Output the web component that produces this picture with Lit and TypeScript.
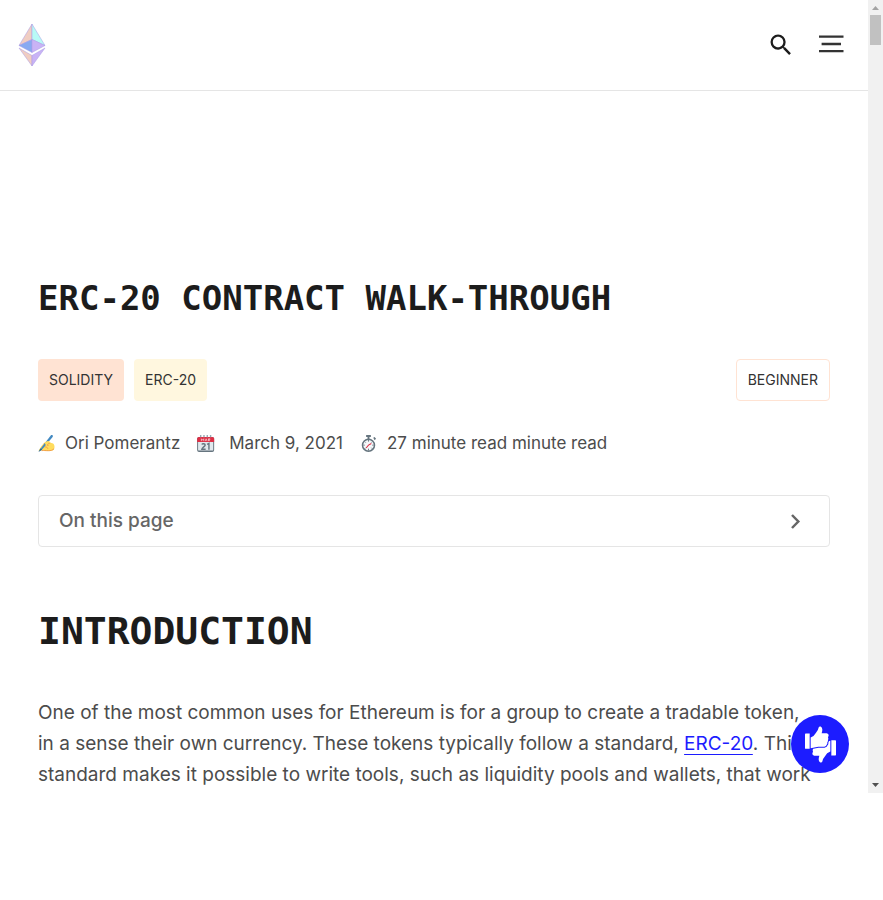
import { LitElement, html, css, svg } from "lit";
import { customElement } from "lit/decorators.js";

const logo = svg`
  <svg viewBox="0 0 28 42" width="28" height="42" aria-hidden="true">
    <g stroke="#a99be6" stroke-width="0.5" stroke-linejoin="round">
      <path d="M14 0 1 21.500l13-6z" fill="#f0cdc2"/>
      <path d="M14 0 27 21.500l-13-6z" fill="#b8faf6"/>
      <path d="M14 15.500 1 21.500l13 7z" fill="#88aaf1"/>
      <path d="M14 15.500 27 21.500l-13 7z" fill="#c9b3f5"/>
      <path d="M1 24l13 7.500v10.500z" fill="#f0cdc2"/>
      <path d="M27 24l-13 7.500v10.500z" fill="#c9b3f5"/>
    </g>
  </svg>`;

const searchIcon = svg`
  <svg viewBox="0 0 24 24" width="28" height="28" fill="#1c1c1c" aria-hidden="true">
    <path d="M15.5 14h-.79l-.28-.27A6.471 6.471 0 0 0 16 9.5 6.5 6.5 0 1 0 9.5 16c1.61 0 3.09-.59 4.23-1.57l.27.28v.79l5 4.99L20.49 19l-4.99-5zm-6 0C7.01 14 5 11.99 5 9.5S7.01 5 9.5 5 14 7.01 14 9.5 11.99 14 9.5 14z"/>
  </svg>`;

const menuIcon = svg`
  <svg viewBox="0 0 26 20" width="26" height="20" stroke="#333" stroke-width="2.3" aria-hidden="true">
    <path d="M1 1.700h24.500M3.600 9h19.400M1 16.200h24.500"/>
  </svg>`;

const chevron = svg`
  <svg viewBox="0 0 24 24" width="24" height="24" fill="none" stroke="#666" stroke-width="2.500" aria-hidden="true">
    <path d="M9 6 15.300 12.500 9 19"/>
  </svg>`;

const writing = svg`
  <svg viewBox="0 0 36 36" width="17" height="17" aria-hidden="true">
    <path d="M1 34c2-3 4-9 9-14 4-4 8-7 12-6l3 2 7 2c3 2 4 8 2 12-2 3-8 4-14 4-7 0-8-2-12-1-2 0-4 1-5 1z" fill="#ffdc5d"/>
    <path d="M12 19c4-1 8 1 10 4m-8 2c3 0 6 1 7 4m5-12c-3 0-6 2-6 5M8 33c8-1 20 3 26-4" fill="none" stroke="#ef9645" stroke-width="1.800"/>
    <path d="M27 1c2-2 6 0 4 3L10 29l-5 4 2-6z" fill="#4289c1"/>
    <path d="M1 36l4-8 4 3z" fill="#2a6797"/>
    <path d="M14 16c3-3 8-5 11-2l-8 9z" fill="#ffdc5d"/>
  </svg>`;

const calendar = svg`
  <svg viewBox="0 0 46 36" width="22" height="17" aria-hidden="true">
    <rect x="0" y="4" width="36" height="32" rx="4" fill="#66757f"/>
    <rect x="2" y="12" width="32" height="21" rx="2" fill="#e1e8ed"/>
    <path d="M0 8q0-4 4-4h28q4 0 4 4v7H0z" fill="#dd2e44"/>
    <path d="M6 0h3v5H6zM13 0h3v5h-3zM20 0h3v5h-3zM27 0h3v5h-3z" fill="#99aab5"/>
    <path d="M9 13V8l2.500 3L14 8v5m3 0 2-5 2 5m3 0V8h3v2h-3l3 3" stroke="#f5cbd0" stroke-width="1.600" fill="none"/>
    <path d="M10 20c1-2 7-2 7 1 0 3-6 5-7 9h8m3-10 4-2v13" stroke="#66757f" stroke-width="3" fill="none"/>
  </svg>`;

const stopwatch = svg`
  <svg viewBox="0 0 36 36" width="17" height="17" aria-hidden="true">
    <path d="M13 0h10v4h-3v5h-4V4h-3zM28 6l3-2 3 4-3 3z" fill="#66757f"/>
    <circle cx="18" cy="21.500" r="12.700" fill="#f5f8fa" stroke="#66757f" stroke-width="3.200"/>
    <path d="M18 10v4M18 29v4M7 21.500h3M26 21.500h3M10 14l2 2M26 14l-2 2M10 29l2-2M26 29l-2-2" stroke="#66757f" stroke-width="2"/>
    <path d="M24 18l-6 3.500-5 6" stroke="#dd2e44" stroke-width="2.200" fill="none"/>
  </svg>`;

const handPath =
  "M17 34Q28 30 33 20Q39 14 41 4Q42 0 47 1Q52 4 52 10Q52 15 50 21H65Q71 22 71 27Q70 31 69 33Q71 38 69 42Q69 46 67 48Q68 53 65 56Q64 61 58 62H40Q28 64 17 66Z";

const thumbs = svg`
  <svg viewBox="0 0 93 110" width="31" height="37" fill="#fff" aria-hidden="true">
    <g transform="rotate(180 46.500 55)">
      <path d="M0 24q0-2 2-2h12v46H2q-2 0-2-2z"/>
      <path d=${handPath}/>
    </g>
    <path d=${handPath} stroke="#1c1cff" stroke-width="6" paint-order="stroke"/>
    <path d="M0 24q0-2 2-2h12v46H2q-2 0-2-2z"/>
  </svg>`;

@customElement("app-root")
export class AppRoot extends LitElement {
  static styles = css`
    :host {
      display: flex;
      background: #fff;
      color: #4c4c4c;
      font-family: Inter, "Liberation Sans", sans-serif;
      font-size: 19px;
      line-height: 31px;
    }
    * { box-sizing: border-box; }
    button { font: inherit; color: inherit; padding: 0; border: 0; background: none; cursor: pointer; }
    svg { display: block; }
    .page { position: relative; flex: 1; min-width: 0; }
    .nav {
      display: flex;
      align-items: center;
      justify-content: space-between;
      padding: 24px 24px 24px 18px;
      border-bottom: 1px solid #e5e5e5;
    }
    .actions { display: flex; align-items: center; gap: 23px; }
    main { padding: 184px 38px 3px; }
    h1, h2 {
      margin: 0;
      color: #1c1c1c;
      font-family: "DejaVu Sans Mono", "Liberation Mono", monospace;
      font-weight: 700;
      text-transform: uppercase;
    }
    h1 { font-size: 34px; line-height: 46px; }
    h2 { margin: 56px 0 38px; font-size: 38px; line-height: 56px; }
    .tags { display: flex; align-items: center; gap: 10px; margin-top: 38px; }
    .tag {
      padding: 10px;
      border: 1px solid transparent;
      border-radius: 4px;
      color: #333;
      font-size: 14px;
      line-height: 20px;
      text-transform: uppercase;
    }
    .solidity { background: #ffe3d3; }
    .erc { background: #fff7df; }
    .level { margin-left: auto; padding: 10px 11px; border-color: #ffe3d3; }
    .meta {
      display: flex;
      flex-wrap: wrap;
      gap: 0 17px;
      margin: 29px 0 39px;
      font-size: 17px;
      line-height: 26px;
    }
    .meta span { display: flex; align-items: center; gap: 10px; }
    .toc {
      display: flex;
      align-items: center;
      justify-content: space-between;
      width: 100%;
      padding: 10px 22px 10px 20px;
      border: 1px solid #e5e5e5;
      border-radius: 4px;
      color: #666;
      font-weight: 500;
      line-height: 30px;
    }
    p { margin: 0; }
    .link {
      color: #1c1cff;
      text-decoration: underline 1px #1c1cff;
      text-underline-offset: 4px;
    }
    .feedback {
      position: absolute;
      right: 19px;
      bottom: 20px;
      display: flex;
      align-items: center;
      justify-content: center;
      width: 58px;
      height: 58px;
      border-radius: 50%;
      background: #1c1cff;
    }
    .scrollbar {
      display: flex;
      flex-direction: column;
      justify-content: space-between;
      width: 15px;
      padding: 0 2px;
      background: #f1f1f1;
    }
    .thumb { height: 30px; background: #c1c1c1; }
    .arrow { width: 11px; height: 15px; }
  `;

  render() {
    return html`
      <div class="page">
        <header class="nav">
          <a href="#" aria-label="Home">${logo}</a>
          <div class="actions">
            <button aria-label="Search">${searchIcon}</button>
            <button aria-label="Menu">${menuIcon}</button>
          </div>
        </header>
        <main>
          <h1>ERC-20 Contract Walk-Through</h1>
          <div class="tags">
            <div class="tag solidity">solidity</div>
            <div class="tag erc">erc-20</div>
            <div class="tag level">Beginner</div>
          </div>
          <div class="meta">
            <span>${writing}Ori Pomerantz</span>
            <span>${calendar}March 9, 2021</span>
            <span>${stopwatch}27 minute read minute read</span>
          </div>
          <button class="toc" aria-expanded="false">On this page${chevron}</button>
          <h2>Introduction</h2>
          <p>
            One of the most common uses for Ethereum is for a group to create a tradable token,<br />
            in a sense their own currency. These tokens typically follow a standard,
            <a class="link" href="#">ERC-20</a>. This standard makes it possible to write tools, such as
            liquidity pools and wallets, that work
          </p>
        </main>
        <button class="feedback" aria-label="Give feedback">${thumbs}</button>
      </div>
      <div class="scrollbar" aria-hidden="true">
        <div>
          <svg class="arrow" viewBox="0 0 11 15"><path d="M2 10l3.500-4 3.500 4z" fill="#a3a3a3"/></svg>
          <div class="thumb"></div>
        </div>
        <svg class="arrow" viewBox="0 0 11 15"><path d="M2 5l3.500 4L9 5z" fill="#505050"/></svg>
      </div>
    `;
  }
}
